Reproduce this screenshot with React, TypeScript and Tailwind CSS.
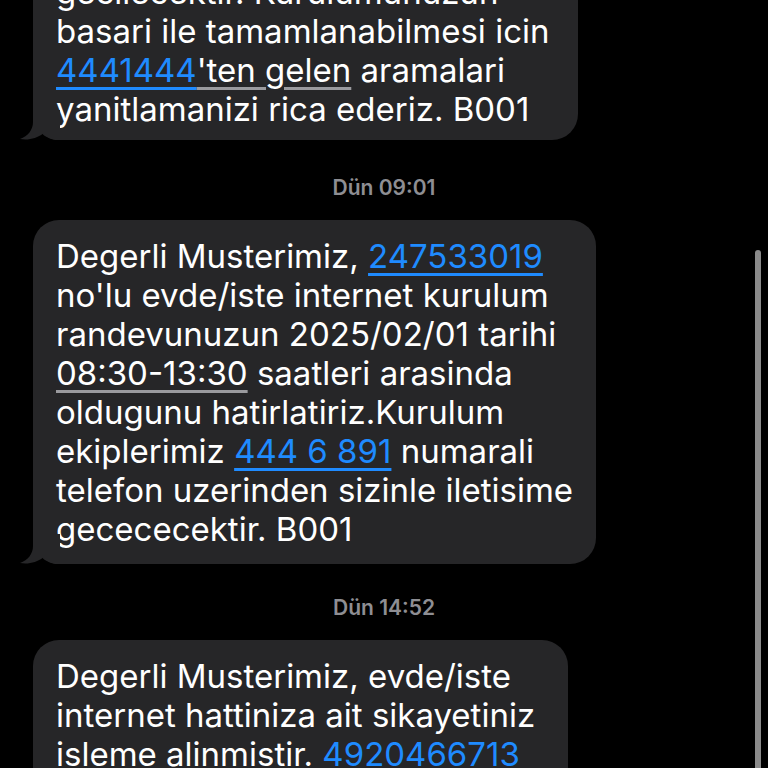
import React from "react";

type Part = { text: string; kind?: "link" | "muted" };

// iMessage style incoming tail, sits on the bubble's bottom-left corner
const Tail = (): JSX.Element => (
  <svg
    className="absolute -left-[13px] bottom-0"
    width="40"
    height="30"
    viewBox="0 0 40 30"
    fill="#262628"
  >
    <path d="M13 0 L13 12 C13 20 8 26 0 29 C8 30.5 17 28.5 23 23.5 C27 27.5 31 30 38 30 L40 30 L40 0 Z" />
  </svg>
);

const Line = ({ parts }: { parts: Part[] }): JSX.Element => (
  <div className="whitespace-nowrap">
    {parts.map((p, i) => {
      if (p.kind === "link")
        return (
          <span
            key={i}
            className="text-[#1f8bff] underline decoration-[3px] underline-offset-[5px]"
          >
            {p.text}
          </span>
        );
      if (p.kind === "muted")
        return (
          <span
            key={i}
            className="underline decoration-[#9a9a9e] decoration-[3px] underline-offset-[5px]"
          >
            {p.text}
          </span>
        );
      return <span key={i}>{p.text}</span>;
    })}
  </div>
);

const Bubble = ({
  lines,
  className,
}: {
  lines: Part[][];
  className?: string;
}): JSX.Element => (
  <div
    className={`relative ml-[33px] w-fit rounded-[26px] bg-[#262628] pl-[23px] pt-[17px] text-white text-[33px] leading-[39px] ${className ?? ""}`}
  >
    {lines.map((l, i) => (
      <Line key={i} parts={l} />
    ))}
    <Tail />
  </div>
);

const Stamp = ({ children }: { children: React.ReactNode }): JSX.Element => (
  <div className="text-center text-[21px] leading-[24px] font-semibold text-[#8e8e93]">
    {children}
  </div>
);

export default function App(): JSX.Element {
  const first: Part[][] = [
    [{ text: "gecilecektir. Kurulumunuzun" }],
    [{ text: "basari ile tamamlanabilmesi icin" }],
    [
      { text: "4441444", kind: "link" },
      { text: "'ten gelen", kind: "muted" },
      { text: " aramalari" },
    ],
    [{ text: "yanitlamanizi rica ederiz. B001" }],
  ];

  const second: Part[][] = [
    [{ text: "Degerli Musterimiz, " }, { text: "247533019", kind: "link" }],
    [{ text: "no'lu evde/iste internet kurulum" }],
    [{ text: "randevunuzun 2025/02/01 tarihi" }],
    [{ text: "08:30-13:30", kind: "muted" }, { text: " saatleri arasinda" }],
    [{ text: "oldugunu hatirlatiriz.Kurulum" }],
    [
      { text: "ekiplerimiz " },
      { text: "444 6 891", kind: "link" },
      { text: " numarali" },
    ],
    [{ text: "telefon uzerinden sizinle iletisime" }],
    [{ text: "gecececektir. B001" }],
  ];

  const third: Part[][] = [
    [{ text: "Degerli Musterimiz, evde/iste" }],
    [{ text: "internet hattiniza ait sikayetiniz" }],
    [{ text: "isleme alinmistir. " }, { text: "4920466713", kind: "link" }],
  ];

  return (
    <div
      className="relative h-[768px] w-[768px] overflow-hidden bg-black"
      style={{ fontFamily: "Inter, 'Liberation Sans', sans-serif" }}
    >
      <div className="flex flex-col">
        <Bubble lines={first} className="-mt-[44px] pb-[11px] pr-[29px]" />
        <div className="mt-[36px] mb-[20px]">
          <Stamp>Dün 09:01</Stamp>
        </div>
        <Bubble lines={second} className="pb-[15px] pr-[23px]" />
        <div className="mt-[32px] mb-[20px]">
          <Stamp>Dün 14:52</Stamp>
        </div>
        <Bubble lines={third} className="pb-[40px] pr-[33px]" />
      </div>

      {/* scroll indicator */}
      <div className="absolute right-[7px] top-[250px] h-[560px] w-[6px] rounded-full bg-[#8a8a8a]" />
    </div>
  );
}
